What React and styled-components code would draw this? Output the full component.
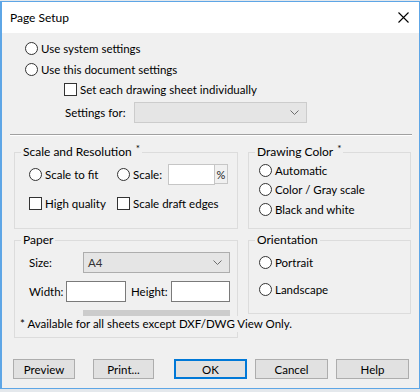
import React from "react";
import styled, { createGlobalStyle } from "styled-components";

const Global = createGlobalStyle`
  body {
    margin: 0;
    background: #e4e8ec;
    font-family: Lato, "Noto Sans", sans-serif;
    font-size: 11.5px;
    color: #000;
  }
  * { box-sizing: border-box; }
`;

const Screen = styled.div`
  width: 420px;
  height: 392px;
  padding-top: 1px;
  overflow: hidden;
`;

const Window = styled.div`
  width: 420px;
  height: 388px;
  border: 1px solid #5ea6e6;
  border-left-width: 2px;
  display: flex;
  flex-direction: column;
  background: #f0f0f0;
`;

const TitleBar = styled.div`
  height: 31px;
  background: #fff;
  display: flex;
  align-items: center;
  justify-content: space-between;
  padding: 0 10px 0 8px;
  font-size: 12px;
`;

const Body = styled.div`
  flex: 1;
  padding: 5px 7px 0 11px;
  display: flex;
  flex-direction: column;
`;

const Row = styled.div`
  display: flex;
  align-items: center;
  height: ${(p) => p.h || 20}px;
  margin-top: ${(p) => p.mt || 0}px;
  padding-left: ${(p) => p.pl || 0}px;
  flex-shrink: 0;
`;

const Radio = styled.span`
  width: 13px;
  height: 13px;
  border: 1px solid #333;
  border-radius: 50%;
  background: #fff;
  margin-right: 3px;
  flex-shrink: 0;
`;

const Check = styled.span`
  width: 13px;
  height: 13px;
  border: 1px solid #333;
  background: #fff;
  margin-right: 3px;
  flex-shrink: 0;
`;

const Option = styled.label`
  display: flex;
  align-items: center;
  width: ${(p) => (p.w ? p.w + "px" : "auto")};
  white-space: nowrap;
  flex-shrink: 0;
`;

const Label = styled.span`
  width: ${(p) => p.w}px;
  margin-left: ${(p) => p.ml || 0}px;
  flex-shrink: 0;
  white-space: nowrap;
`;

const Select = styled.div`
  width: ${(p) => p.w}px;
  height: 21px;
  background: #e5e5e5;
  border: 1px solid ${(p) => (p.disabled ? "#cccccc" : "#adadad")};
  display: flex;
  align-items: center;
  justify-content: space-between;
  padding: 0 7px 0 4px;
  color: #333;
`;

const Input = styled.div`
  width: ${(p) => p.w}px;
  height: 21px;
  background: #fff;
  border: 1px solid ${(p) => p.border || "#7a7a7a"};
  flex-shrink: 0;
`;

const Spin = styled.div`
  width: 13px;
  height: 20px;
  border: 1px solid #c6c6c6;
  border-left: none;
  display: flex;
  align-items: center;
  justify-content: center;
  font-size: 11px;
  color: #222;
`;

const Separator = styled.div`
  height: 2px;
  margin: 11px 0 0 -3px;
  border-top: 1px solid #a0a0a0;
  border-bottom: 1px solid #fff;
  flex-shrink: 0;
`;

const Groups = styled.div`
  display: grid;
  grid-template-columns: 224px 163px;
  column-gap: 10px;
  row-gap: 3px;
  margin: 8px 0 0 1px;
  align-items: start;
`;

const Group = styled.fieldset`
  margin: 0;
  padding: ${(p) => p.pad || "0"};
  border: 1px solid #dcdcdc;
  min-width: 0;
  height: ${(p) => p.h}px;
`;

const Legend = styled.legend`
  margin-left: ${(p) => p.ml}px;
  padding: 0 2px;
  line-height: 16px;
  font-size: 12px;
`;

const Star = styled.sup`
  font-size: 10px;
  margin-left: 4px;
  vertical-align: 4px;
  line-height: 0;
`;

const Bar = styled.div`
  width: 147px;
  height: 6px;
  background: #cccccc;
  margin: 8px 0 0 54px;
`;

const Note = styled.div`
  background: #f0f0f0;
  white-space: nowrap;
  line-height: 16px;
  margin-left: -9px;
  width: max-content;
  padding-right: 2px;
`;

const Buttons = styled.div`
  display: flex;
  margin-top: 21px;
  height: 20px;
`;

const Button = styled.button`
  width: ${(p) => p.w}px;
  margin-left: ${(p) => p.ml}px;
  height: 20px;
  background: #e1e1e1;
  border: ${(p) => (p.primary ? "2px solid #0078d7" : "1px solid #adadad")};
  font-family: inherit;
  font-size: 11.5px;
  color: #000;
  padding: 0;
`;

const Chevron = () => (
  <svg width="9" height="5" viewBox="0 0 9 5">
    <path d="M0.5 0.5 L4.5 4.5 L8.5 0.5" fill="none" stroke="#6d6d6d" strokeWidth="1" />
  </svg>
);

const Close = () => (
  <svg width="11" height="11" viewBox="0 0 11 11">
    <path d="M0.5 0.5 L10.5 10.5 M10.5 0.5 L0.5 10.5" stroke="#000" strokeWidth="1.1" />
  </svg>
);

export default function App() {
  return (
    <Screen>
      <Global />
      <Window>
        <TitleBar>
          <span>Page Setup</span>
          <Close />
        </TitleBar>
        <Body>
          <Row pl={12}>
            <Option><Radio />Use system settings</Option>
          </Row>
          <Row mt={1} pl={12}>
            <Option><Radio />Use this document settings</Option>
          </Row>
          <Row pl={51}>
            <Option><Check />Set each drawing sheet individually</Option>
          </Row>
          <Row mt={3} pl={52} h={21}>
            <Label w={69}>Settings for:</Label>
            <Select w={173} disabled><span /><Chevron /></Select>
          </Row>
          <Separator />
          <Groups>
            <Group h={85} pad="4px 0 0 14px">
              <Legend ml={-8}>Scale and Resolution<Star>*</Star></Legend>
              <Row>
                <Option w={88}><Radio />Scale to fit</Option>
                <Option w={51}><Radio />Scale:</Option>
                <Input w={47} border="#c6c6c6" />
                <Spin>%</Spin>
              </Row>
              <Row mt={9}>
                <Option w={88}><Check />High quality</Option>
                <Option><Check />Scale draft edges</Option>
              </Row>
            </Group>
            <Group h={85} pad="0 0 0 10px">
              <Legend ml={-4}>Drawing Color<Star>*</Star></Legend>
              <Row><Option><Radio />Automatic</Option></Row>
              <Row h={19}><Option><Radio />Color / Gray scale</Option></Row>
              <Row><Option><Radio />Black and white</Option></Row>
            </Group>
            <Group h={106} pad="4px 0 0 14px">
              <Legend ml={-8}>Paper</Legend>
              <Row h={21}>
                <Label w={54}>Size:</Label>
                <Select w={147}>A4<Chevron /></Select>
              </Row>
              <Row h={21} mt={8}>
                <Label w={37}>Width:</Label>
                <Input w={60} />
                <Label w={40} ml={5}>Height:</Label>
                <Input w={59} />
              </Row>
              <Bar />
              <Note>* Available for all sheets except DXF/DWG View Only.</Note>
            </Group>
            <Group h={82} pad="4px 0 0 10px">
              <Legend ml={-4}>Orientation</Legend>
              <Row><Option><Radio />Portrait</Option></Row>
              <Row mt={7}><Option><Radio />Landscape</Option></Row>
            </Group>
          </Groups>
          <Buttons>
            <Button w={62} ml={0}>Preview</Button>
            <Button w={61} ml={18}>Print...</Button>
            <Button w={73} ml={20} primary>OK</Button>
            <Button w={73} ml={8}>Cancel</Button>
            <Button w={73} ml={8}>Help</Button>
          </Buttons>
        </Body>
      </Window>
    </Screen>
  );
}
